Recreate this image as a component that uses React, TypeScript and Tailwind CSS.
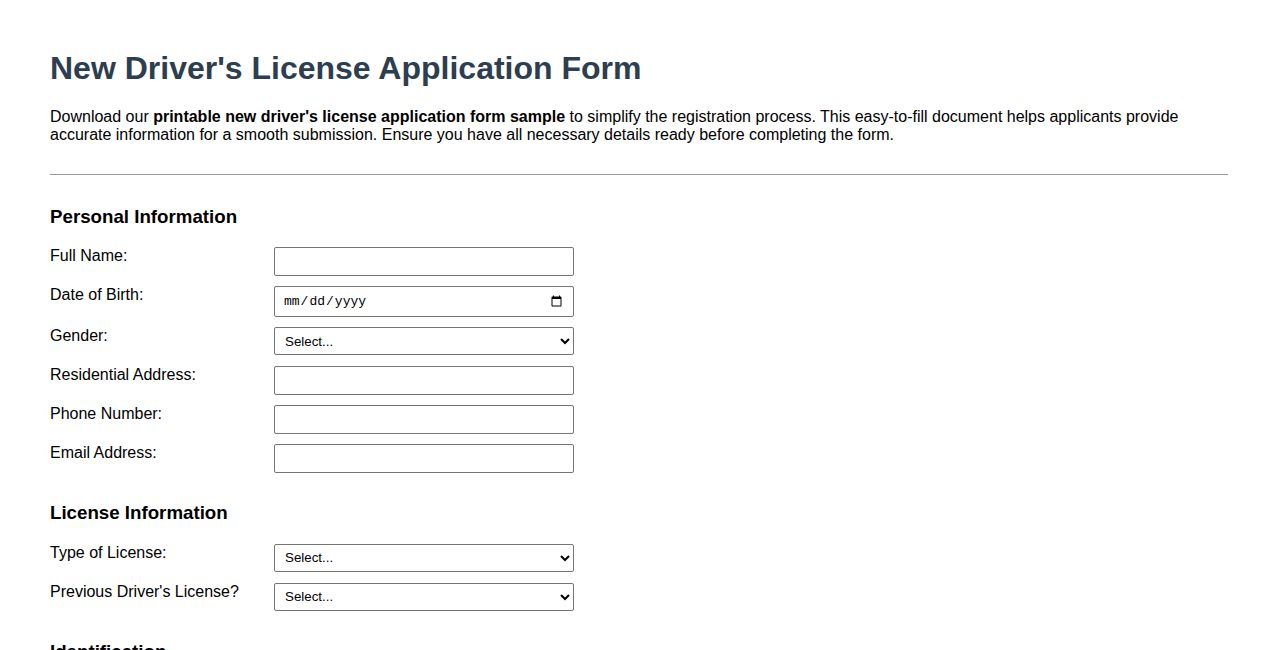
import React from "react";

type Field = { label: string; kind: "text" | "date" | "select" | "email" | "tel" };

const personal: Field[] = [
  { label: "Full Name:", kind: "text" },
  { label: "Date of Birth:", kind: "date" },
  { label: "Gender:", kind: "select" },
  { label: "Residential Address:", kind: "text" },
  { label: "Phone Number:", kind: "tel" },
  { label: "Email Address:", kind: "email" },
];

const license: Field[] = [
  { label: "Type of License:", kind: "select" },
  { label: "Previous Driver's License?", kind: "select" },
];

const identification: Field[] = [
  { label: "ID Type:", kind: "select" },
  { label: "ID Number:", kind: "text" },
  { label: "Issue Date:", kind: "date" },
];

function Row({ f }: { f: Field }) {
  const base =
    "w-[300px] border border-[#767676] rounded-[2px] bg-white text-[13.33px] text-black px-[8px] outline-none";
  let control: React.ReactNode;
  let rowH = "h-[29px]";
  if (f.kind === "select") {
    control = (
      <select className={`${base} h-[28px] py-0 pl-[6px]`} defaultValue="">
        <option value="">Select...</option>
      </select>
    );
  } else if (f.kind === "date") {
    rowH = "h-[31px]";
    control = (
      <input
        type="date"
        className={`${base} h-[31px] py-0 font-['Liberation_Mono',monospace] text-[13px]`}
      />
    );
  } else {
    control = <input type={f.kind} className={`${base} h-[29px] py-0`} />;
  }
  return (
    <div className={`flex items-start ${rowH} mb-[10px]`}>
      <label className="w-[224px] shrink-0 text-[16px] leading-[18.4px] text-black">{f.label}</label>
      {control}
    </div>
  );
}

function Section({ title, fields, first }: { title: string; fields: Field[]; first?: boolean }) {
  return (
    <div className={first ? "" : "mt-[29px]"}>
      <h3 className="text-[18.72px] leading-[21.5px] font-bold text-black mb-[20px]">{title}</h3>
      {fields.map((f) => (
        <Row key={f.label} f={f} />
      ))}
    </div>
  );
}

export default function App() {
  return (
    <div className="bg-white min-h-screen font-['Liberation_Sans',Arial,sans-serif] px-[50px] pt-[50px] pb-[50px] text-black">
      <h1 className="text-[32px] leading-[36.8px] font-bold text-[#2c3e50] mb-[21px]">
        New Driver's License Application Form
      </h1>
      <p className="text-[16px] leading-[18.4px] text-black">
        Download our <strong className="font-bold">printable new driver's license application form sample</strong> to
        simplify the registration process. This easy-to-fill document helps applicants provide accurate information
        for a smooth submission. Ensure you have all necessary details ready before completing the form.
      </p>
      <div className="h-px bg-[#9a9a9a] mt-[29px] mb-[31px]" />
      <form>
        <Section title="Personal Information" fields={personal} first />
        <Section title="License Information" fields={license} />
        <Section title="Identification" fields={identification} />
      </form>
    </div>
  );
}
